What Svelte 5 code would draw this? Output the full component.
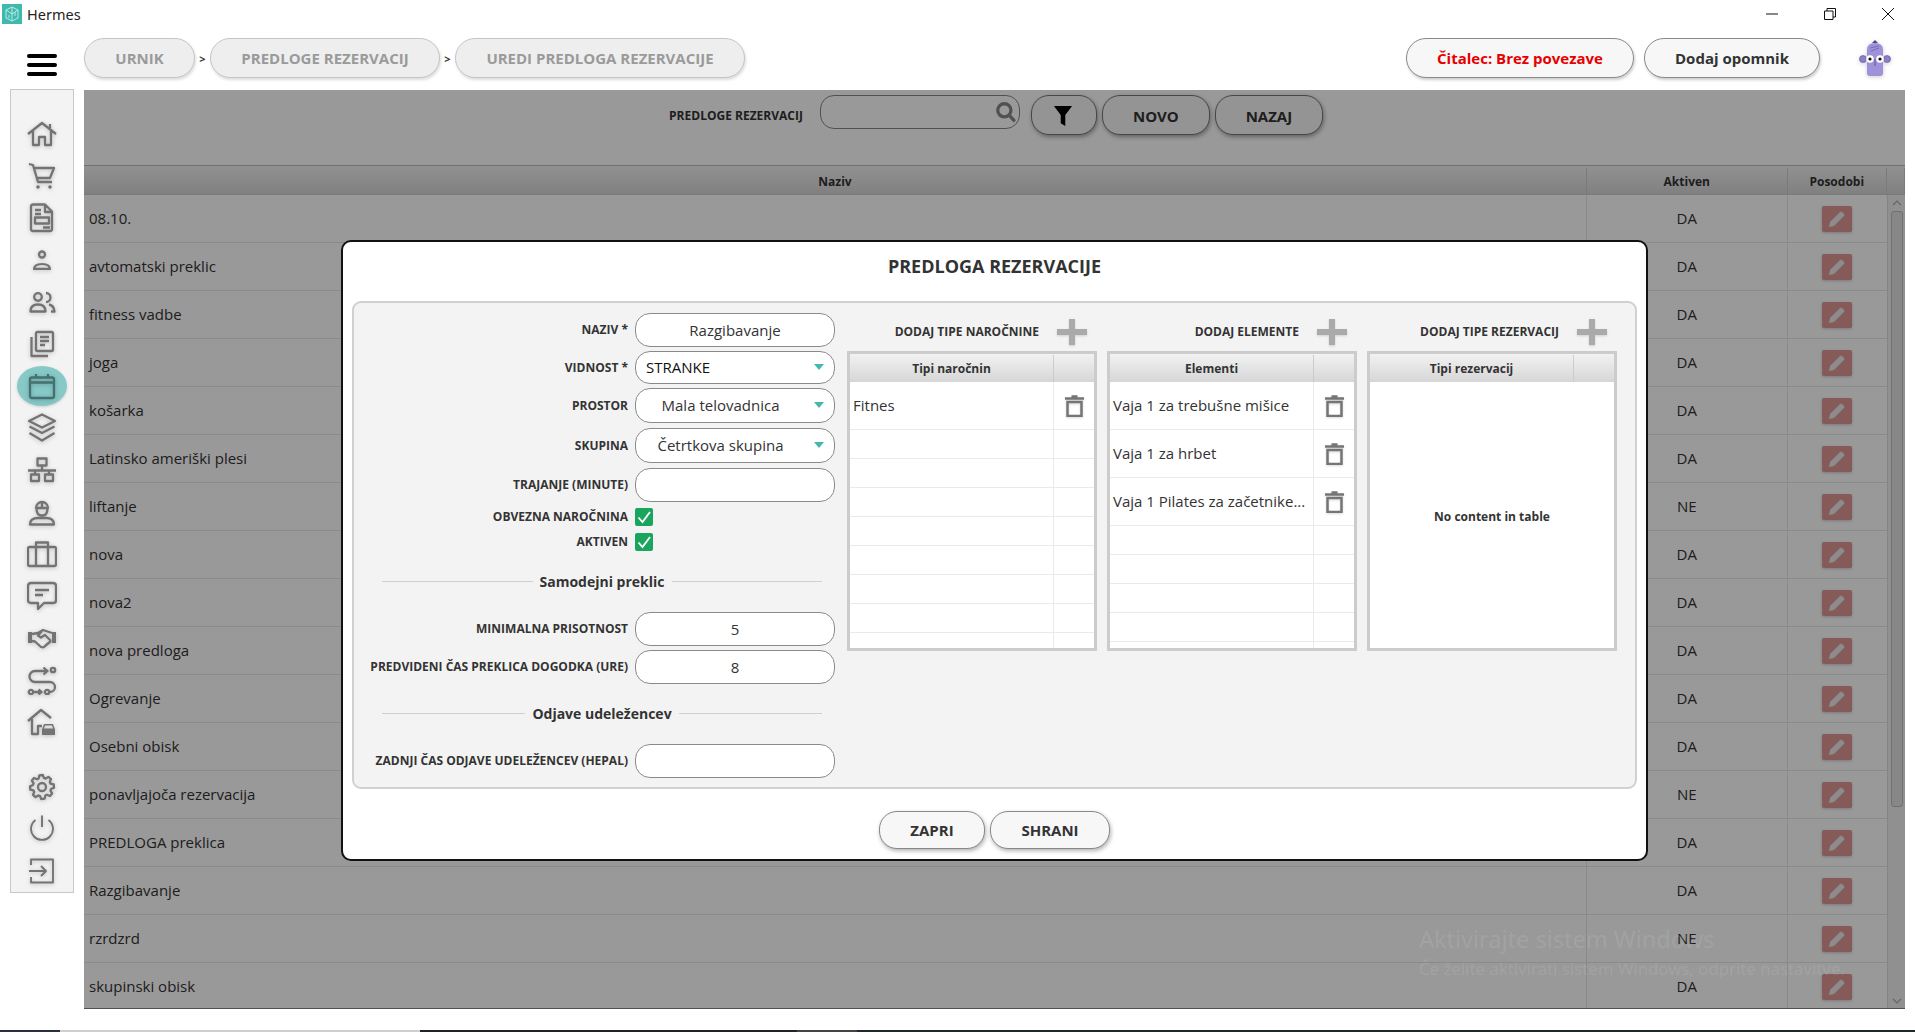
<script>
  // circle as a path fragment, so every icon stays one stroked path
  const c = (x, y, r) => `M${x - r} ${y}a${r} ${r} 0 1 0 ${2 * r} 0a${r} ${r} 0 1 0 ${-2 * r} 0`;

  function gear(cx, cy, outer, inner, teeth) {
    let d = '';
    const step = (Math.PI * 2) / teeth;
    for (let i = 0; i < teeth; i++) {
      const a = i * step - step / 2;
      const pts = [
        [inner, a + step * 0.02],
        [outer, a + step * 0.22],
        [outer, a + step * 0.58],
        [inner, a + step * 0.78],
      ];
      for (const [r, t] of pts) {
        d += `${d ? 'L' : 'M'}${(cx + r * Math.cos(t)).toFixed(2)} ${(cy + r * Math.sin(t)).toFixed(2)}`;
      }
    }
    return d + 'Z';
  }

  const mainIcons = [
    { d: 'M1 15L15 4l14 11M23 9V5M6 12v14h6v-8h6v8h6V12' },
    { d: 'M2 3l4 1 5 17h14M7.500 7H27l-4 10H10', fill: c(11, 26, 1.800) + c(23, 26, 1.800) },
    { d: 'M6 1.500h12l7 7V26q0 2-2 2H6q-2 0-2-2V3.500q0-2 2-2zM18 2v7h7M8 7h6M8 11h6M8 14.500h14v6H8zM16 24.500h7' },
    { d: c(15, 9.500, 3), thinHead: true, fill: 'M6 25q-.5-7 9-7t9 7zM8.500 22.800h13q-1-2.800-6.500-2.800t-6.500 2.800z' },
    { d: c(11, 10, 3.800) + 'M19 6a4.500 4.500 0 0 1 0 9M3.500 24.500q0-7 7.500-7t7.500 7zM22 17.500q5 1 5.500 7H24' },
    { d: 'M10.500 3H24.500Q26 3 26 4.500V20.500Q26 22 24.500 22H10.500Q9 22 9 20.500V4.500Q9 3 10.500 3zM13 8h9M13 12h9M13 16h5M4.500 8V27H21' },
    { d: 'M5 6.500H25Q27 6.500 27 8.500V25Q27 27 25 27H5Q3 27 3 25V8.500Q3 6.500 5 6.500zM3 11.500H27M9 3V7M21 3V7', active: true },
    { d: 'M15 1.500L28 8 15 14.500 2 8zM2.500 13.500L15 20 27.500 13.500M2.500 20L15 27.500 27.500 20' },
    { d: 'M10.500 3.500h9v7h-9zM15 10.500V15M1 15.500H29M8 15.500V19M22 15.500V19M4 19.500h8v6.500H4zM18 19.500h8v6.500h-8z' },
    { d: 'M9 11a6 6 0 0 1 12 0zM15 5v6M9.500 11.500q0 7 5.500 7t5.500-7M3 27.500q0-6.500 8-6.500h8q8 0 8 6.500z' },
    { d: 'M2.500 8H27.500Q29 8 29 9.500V25.500Q29 27 27.500 27H2.500Q1 27 1 25.500V9.500Q1 8 2.500 8zM9 8V3.500H21V8M9 8V27M21 8V27' },
    { d: 'M4 2H26Q29 2 29 5V19Q29 22 26 22H17L11 28V22H4Q1 22 1 19V5Q1 2 4 2zM8 9H22M8 14h8' },
    { d: 'M5 11l6-1 5-3 9 3M5 18l3 .5 6 5.500q3 1 4-1l6-5M15 8l-4 4.500 3 2 4-2.500 6 6', fill: 'M1 9h4v11H1zM25 9h4v11h-4z' },
    { d: 'M20 6H8a5.500 5.500 0 0 0 0 11H23a5 5 0 0 1 0 10h-1M16.500 2.500L20.500 6l-4 3.500M7 27h7M11.500 24.500L14.500 27l-3 2.500' + c(26, 5, 2.200) + c(4, 27, 2.200) + c(20, 27, 2.200) },
    { d: 'M1 14L14 3l10 8M5 12V27h6V19h4', fill: 'M15 28v-5.500l2-5.500h9l2 5.500V28zM18 18.500l-1 3h9l-1-3z' },
  ];

  const bottomIcons = [
    { d: gear(15, 15, 12, 9.200, 8) + c(15, 15, 4) },
    { d: 'M8.500 6a11 11 0 1 0 13 0M15 1.500V13', thin: true },
    { d: 'M4 9V3.500H26V26.500H4V21M2 15H19M14 10l5 5-5 5', thin: true },
  ];

  const templates = [
    ['08.10.', 'DA'], ['avtomatski preklic', 'DA'], ['fitness vadbe', 'DA'], ['joga', 'DA'],
    ['košarka', 'DA'], ['Latinsko ameriški plesi', 'DA'], ['liftanje', 'NE'], ['nova', 'DA'],
    ['nova2', 'DA'], ['nova predloga', 'DA'], ['Ogrevanje', 'DA'], ['Osebni obisk', 'DA'],
    ['ponavljajoča rezervacija', 'NE'], ['PREDLOGA preklica', 'DA'], ['Razgibavanje', 'DA'],
    ['rzrdzrd', 'NE'], ['skupinski obisk', 'DA'],
  ];

  const tables = [
    { add: 'DODAJ TIPE NAROČNINE', head: 'Tipi naročnin', items: ['Fitnes'], blanks: 8 },
    { add: 'DODAJ ELEMENTE', head: 'Elementi', items: ['Vaja 1 za trebušne mišice', 'Vaja 1 za hrbet', 'Vaja 1 Pilates za začetnike...'], blanks: 5 },
    { add: 'DODAJ TIPE REZERVACIJ', head: 'Tipi rezervacij', items: [], blanks: 0 },
  ];
</script>

{#snippet trash()}
  <svg class="trash" viewBox="0 0 19 22" aria-hidden="true">
    <path d="M6.500 1.500h6M0 3.500h19" />
    <path d="M2.500 7h14v14h-14z" />
  </svg>
{/snippet}

{#snippet chevron()}
  <svg class="chev" viewBox="0 0 10 6" aria-hidden="true"><path d="M0 0h10L5 6z" /></svg>
{/snippet}

{#snippet check()}
  <span class="check">
    <svg viewBox="0 0 18 18" aria-hidden="true"><path d="M3.500 9.500l4 4.500 7.500-10" /></svg>
  </span>
{/snippet}

<div class="page">
  <div class="titlebar">
    <svg class="logo" viewBox="0 0 20 20" aria-hidden="true">
      <rect width="20" height="20" fill="#3db9ad" />
      <path d="M10 3l6 3v8l-6 3-6-3V6zM10 3v14M4 6l6 4 6-4M7 11v3M13 8v4" fill="none" stroke="#bfe9e4" stroke-width="1" />
    </svg>
    <span class="app-name">Hermes</span>
    <div class="win-controls">
      <svg viewBox="0 0 12 12" aria-hidden="true"><path d="M0 6h12" /></svg>
      <svg viewBox="0 0 12 12" aria-hidden="true"><path d="M.5 3h8.500v8.500H.5zM3 3V.5h8.500V9H9" /></svg>
      <svg viewBox="0 0 12 12" aria-hidden="true"><path d="M0 0l12 12M12 0L0 12" /></svg>
    </div>
  </div>

  <div class="topbar">
    <div class="burger"><span></span><span></span><span></span></div>
    <nav class="crumbs">
      <button class="crumb urnik">URNIK</button>
      <span class="sep">&gt;</span>
      <button class="crumb templates">PREDLOGE REZERVACIJ</button>
      <span class="sep">&gt;</span>
      <button class="crumb edit">UREDI PREDLOGA REZERVACIJE</button>
    </nav>
    <div class="top-right">
      <button class="pill reader">Čitalec: Brez povezave</button>
      <button class="pill reminder">Dodaj opomnik</button>
      <svg class="avatar" viewBox="0 0 32 38" aria-hidden="true">
        <circle cx="4" cy="20" r="3.500" fill="#8d7fc8" stroke="#5b4f94" stroke-width=".6" />
        <circle cx="28" cy="20" r="3.500" fill="#8d7fc8" stroke="#5b4f94" stroke-width=".6" />
        <path d="M16 1l3 3h-6z" fill="#4f4594" />
        <path d="M8 11q0-7 8-7t8 7v23q0 3-3 3H11q-3 0-3-3z" fill="#a092d8" />
        <path d="M11 9l9-2M12 12l8-3" stroke="#6e61ad" stroke-width=".8" />
        <circle cx="11" cy="20" r="3.800" fill="#fff" />
        <circle cx="21" cy="20" r="3.800" fill="#fff" />
        <circle cx="11" cy="20" r="1.600" fill="#111" />
        <circle cx="21" cy="20" r="1.600" fill="#111" />
        <path d="M16 20v7" stroke="#4f4594" stroke-width=".8" />
      </svg>
    </div>
  </div>

  <div class="body">
    <aside class="sidebar">
      <div class="icon-group">
        {#each mainIcons as icon}
          <div class="icon-slot" class:active={icon.active}>
            <svg viewBox="0 0 30 30" aria-hidden="true">
              <path d={icon.d} />
              {#if icon.fill}<path class="solid" d={icon.fill} fill-rule="evenodd" />{/if}
            </svg>
          </div>
        {/each}
      </div>
      <div class="icon-group bottom">
        {#each bottomIcons as icon}
          <div class="icon-slot" class:thin={icon.thin}>
            <svg viewBox="0 0 30 30" aria-hidden="true"><path d={icon.d} /></svg>
          </div>
        {/each}
      </div>
    </aside>

    <main class="main">
      <div class="toolbar">
        <span class="tool-label">PREDLOGE REZERVACIJ</span>
        <div class="search">
          <svg viewBox="0 0 20 20" aria-hidden="true">
            <circle cx="8.500" cy="8.500" r="6" />
            <path d="M13 13l5 5.500" />
          </svg>
        </div>
        <button class="tool-btn filter" aria-label="Filter">
          <svg viewBox="0 0 20 22" aria-hidden="true"><path d="M0 0h20l-7.500 10v12l-5-3V10z" /></svg>
        </button>
        <button class="tool-btn novo">NOVO</button>
        <button class="tool-btn nazaj">NAZAJ</button>
      </div>

      <div class="list">
        <div class="list-head">
          <div>Naziv</div>
          <div>Aktiven</div>
          <div>Posodobi</div>
          <div></div>
        </div>
        <div class="list-body">
          <div class="rows">
            {#each templates as [name, active]}
              <div class="list-row">
                <div class="name">{name}</div>
                <div class="status">{active}</div>
                <div class="action">
                  <button class="edit-btn" aria-label="Posodobi">
                    <svg viewBox="0 0 16 16" aria-hidden="true">
                      <path d="M0 16l1-5L11 1q1-1 2 0l2 2q1 1 0 2L5 15z" />
                    </svg>
                  </button>
                </div>
              </div>
            {/each}
          </div>
          <div class="scrollbar">
            <svg viewBox="0 0 10 6" aria-hidden="true"><path d="M1 5l4-4 4 4" /></svg>
            <div class="thumb"></div>
            <svg viewBox="0 0 10 6" aria-hidden="true"><path d="M1 1l4 4 4-4" /></svg>
          </div>
        </div>
      </div>

      <div class="overlay">
        <section class="modal">
          <h2>PREDLOGA REZERVACIJE</h2>
          <div class="panel">
            <div class="form">
              <div class="row r34"><span class="lbl">NAZIV *</span><div class="field center">Razgibavanje</div></div>
              <div class="row r33"><span class="lbl">VIDNOST *</span><div class="field select left">STRANKE{@render chevron()}</div></div>
              <div class="row r35"><span class="lbl">PROSTOR</span><div class="field select">Mala telovadnica{@render chevron()}</div></div>
              <div class="row r35"><span class="lbl">SKUPINA</span><div class="field select">Četrtkova skupina{@render chevron()}</div></div>
              <div class="row r34"><span class="lbl">TRAJANJE (MINUTE)</span><div class="field"></div></div>
              <div class="row check-row first"><span class="lbl">OBVEZNA NAROČNINA</span>{@render check()}</div>
              <div class="row check-row"><span class="lbl">AKTIVEN</span>{@render check()}</div>

              <div class="divider one"><span>Samodejni preklic</span></div>
              <div class="row r34"><span class="lbl">MINIMALNA PRISOTNOST</span><div class="field center">5</div></div>
              <div class="row r34"><span class="lbl">PREDVIDENI ČAS PREKLICA DOGODKA (URE)</span><div class="field center">8</div></div>

              <div class="divider two"><span>Odjave udeležencev</span></div>
              <div class="row r34"><span class="lbl">ZADNJI ČAS ODJAVE UDELEŽENCEV (HEPAL)</span><div class="field"></div></div>
            </div>

            <div class="sub-tables">
              {#each tables as t}
                <div class="sub-col">
                  <div class="sub-add">
                    <span>{t.add}</span>
                    <svg viewBox="0 0 30 26" aria-hidden="true"><path d="M12 0h6v10h12v6H18v10h-6V16H0v-6h12z" /></svg>
                  </div>
                  <div class="sub-table">
                    <div class="sub-head"><div>{t.head}</div><div></div></div>
                    {#each t.items as item}
                      <div class="sub-row tall">
                        <div class="sub-name">{item}</div>
                        <div class="sub-del">{@render trash()}</div>
                      </div>
                    {/each}
                    {#each Array(t.blanks) as _}
                      <div class="sub-row"><div></div><div></div></div>
                    {/each}
                    {#if t.items.length === 0}
                      <div class="empty">No content in table</div>
                    {/if}
                  </div>
                </div>
              {/each}
            </div>
          </div>
          <div class="modal-actions">
            <button class="act zapri">ZAPRI</button>
            <button class="act shrani">SHRANI</button>
          </div>
        </section>
      </div>

      <div class="watermark">
        <div class="wm-big">Aktivirajte sistem Windows</div>
        <div class="wm-small">Če želite aktivirati sistem Windows, odprite nastavitve.</div>
      </div>
    </main>
  </div>

  <div class="taskbar">
    <span class="t1"></span><span class="t2"></span><span class="t3"></span><span class="t4"></span><span class="t5"></span>
  </div>
</div>

<style>
  :global(body) {
    margin: 0;
    background: #fff;
    font-family: "Open Sans", "Liberation Sans", sans-serif;
    color: #333;
  }

  button {
    font-family: inherit;
    cursor: pointer;
    padding: 0;
  }

  .page {
    width: 1915px;
    height: 1032px;
    overflow: hidden;
    display: flex;
    flex-direction: column;
  }

  .titlebar {
    height: 32px;
    display: flex;
    align-items: flex-start;
    flex-shrink: 0;
  }

  .logo {
    width: 20px;
    height: 20px;
    margin: 4px 0 0 2px;
  }

  .app-name {
    margin: 4px 0 0 5px;
    font-family: "Noto Sans", sans-serif;
    font-size: 14.500px;
    line-height: 20px;
    color: #222;
  }

  .win-controls {
    margin-left: auto;
    margin-right: 21px;
    margin-top: 8px;
    display: flex;
    gap: 46px;
  }

  .win-controls svg {
    width: 12px;
    height: 12px;
    fill: none;
    stroke: #111;
    stroke-width: 1;
  }

  .topbar {
    height: 58px;
    display: flex;
    align-items: flex-start;
    padding: 6px 24px 0 27px;
    flex-shrink: 0;
    box-sizing: border-box;
  }

  .burger {
    width: 30px;
    margin: 16px 27px 0 0;
    display: flex;
    flex-direction: column;
    gap: 5px;
  }

  .burger span {
    height: 4px;
    border-radius: 2px;
    background: #000;
  }

  .crumbs {
    display: flex;
    align-items: center;
  }

  .crumb {
    height: 40px;
    box-sizing: border-box;
    border: 1.500px solid #c6c6c6;
    border-radius: 20px;
    background: #eee;
    color: #9a9a9a;
    font-size: 15px;
    font-weight: 700;
    box-shadow: 1px 2px 3px rgba(0, 0, 0, 0.14);
  }

  .urnik { width: 111px; }
  .templates { width: 230px; }
  .edit { width: 290px; }

  .sep {
    width: 15px;
    text-align: center;
    font-size: 11px;
    font-weight: 700;
    color: #333;
  }

  .top-right {
    margin-left: auto;
    display: flex;
    align-items: flex-start;
  }

  .pill {
    height: 40px;
    box-sizing: border-box;
    border: 1.500px solid #8a8a8a;
    border-radius: 20px;
    background: #f7f7f7;
    font-size: 15px;
    font-weight: 700;
    box-shadow: 1px 2px 3px rgba(0, 0, 0, 0.2);
  }

  .reader {
    width: 228px;
    color: #e60000;
  }

  .reminder {
    width: 176px;
    margin-left: 10px;
    color: #333;
  }

  .avatar {
    width: 32px;
    height: 38px;
    margin: 1px 0 0 39px;
    filter: drop-shadow(0 1px 2px rgba(0, 0, 0, 0.2));
  }

  .body {
    display: flex;
    height: 919px;
    flex-shrink: 0;
  }

  .sidebar {
    width: 64px;
    height: 804px;
    margin: -1px 0 0 10px;
    box-sizing: border-box;
    background: #f3f3f3;
    border: 1.500px solid #c8c8c8;
    padding-top: 23px;
  }

  .icon-slot {
    height: 42px;
    display: flex;
    align-items: center;
    justify-content: center;
    position: relative;
  }

  .icon-slot svg {
    width: 30px;
    height: 30px;
    fill: none;
    stroke: #737373;
    stroke-width: 2.300;
    stroke-linejoin: round;
    filter: drop-shadow(0 1px 2px rgba(0, 0, 0, 0.22));
    position: relative;
  }

  .icon-slot .solid {
    fill: #737373;
    stroke: none;
  }

  .icon-slot.thin svg {
    stroke-width: 1.900;
  }

  .icon-slot.active::before {
    content: "";
    position: absolute;
    left: 6px;
    top: 1px;
    width: 50px;
    height: 40px;
    border-radius: 50%;
    background: #86c9c6;
    box-shadow: 0 1px 3px rgba(0, 0, 0, 0.15);
  }

  .icon-slot.active svg {
    stroke: #44706f;
  }

  .bottom {
    margin-top: 23px;
  }

  .main {
    position: relative;
    width: 1821px;
    margin-left: 10px;
    display: flex;
    flex-direction: column;
    background: #fff;
    overflow: hidden;
  }

  .toolbar {
    height: 75px;
    flex-shrink: 0;
    box-sizing: border-box;
    padding: 5px 0 0 3px;
    display: flex;
    justify-content: center;
    align-items: flex-start;
  }

  .tool-label {
    font-size: 12px;
    font-weight: 700;
    line-height: 42px;
    color: #333;
  }

  .search {
    width: 200px;
    height: 34px;
    box-sizing: border-box;
    margin-left: 17px;
    border: 1.500px solid #888;
    border-radius: 14px;
    background: #fff;
    display: flex;
    align-items: center;
    justify-content: flex-end;
    padding-right: 2px;
  }

  .search svg {
    width: 22px;
    height: 22px;
    fill: none;
    stroke: #888;
    stroke-width: 3;
  }

  .tool-btn {
    height: 40px;
    width: 108px;
    box-sizing: border-box;
    margin-left: 5px;
    padding-top: 2px;
    border: 1.500px solid #777;
    border-radius: 18px;
    background: #f7f7f7;
    font-size: 15px;
    font-weight: 700;
    color: #333;
    box-shadow: 1px 2px 4px rgba(0, 0, 0, 0.35);
  }

  .filter {
    width: 66px;
    margin-left: 11px;
    display: flex;
    align-items: center;
    justify-content: center;
  }

  .filter svg {
    width: 20px;
    height: 20px;
    fill: #000;
    margin-left: -2px;
  }

  .novo { margin-left: 5px; }

  .list {
    flex: 1;
    display: flex;
    flex-direction: column;
    min-height: 0;
    border-bottom: 1.500px solid #888;
  }

  .list-head,
  .list-row {
    display: grid;
    grid-template-columns: 1503px 200.500px 99.500px;
  }

  .list-head {
    grid-template-columns: 1503px 200.500px 99.500px 18px;
    height: 30px;
    flex-shrink: 0;
    box-sizing: border-box;
    padding-top: 2px;
    border-top: 1.500px solid #bbb;
    border-bottom: 1.500px solid #ccc;
    background: linear-gradient(#f2f2f2, #d6d6d6);
    font-size: 12px;
    font-weight: 700;
    color: #333;
  }

  .list-head > div {
    display: flex;
    align-items: center;
    justify-content: center;
    border-right: 1px solid #ccc;
  }

  .list-body {
    flex: 1;
    min-height: 0;
    display: flex;
  }

  .rows {
    width: 1803px;
    overflow: hidden;
  }

  .list-row {
    height: 48px;
    box-sizing: border-box;
    border-bottom: 1px solid #e6e6e6;
    font-size: 15px;
    color: #333;
    align-items: stretch;
  }

  .name {
    padding-left: 5px;
    line-height: 47px;
    border-right: 1px solid #e6e6e6;
  }

  .status {
    text-align: center;
    line-height: 47px;
    border-right: 1px solid #e6e6e6;
  }

  .action {
    display: flex;
    align-items: center;
    justify-content: center;
  }

  .edit-btn {
    width: 30px;
    height: 26px;
    border: none;
    border-radius: 2px;
    background: #e19696;
    display: flex;
    align-items: center;
    justify-content: center;
    box-shadow: 0 1px 3px rgba(0, 0, 0, 0.2);
  }

  .edit-btn svg {
    width: 16px;
    height: 16px;
    fill: #eaeaea;
  }

  .scrollbar {
    width: 18px;
    background: #f0f0f0;
    border-left: 1px solid #ddd;
    box-sizing: border-box;
    display: flex;
    flex-direction: column;
    align-items: center;
    padding-top: 5px;
  }

  .scrollbar svg {
    width: 10px;
    height: 6px;
    fill: none;
    stroke: #aaa;
    stroke-width: 1.200;
    flex-shrink: 0;
  }

  .thumb {
    width: 12px;
    height: 596px;
    margin: 5px 0 191px;
    box-sizing: border-box;
    border: 1px solid #bbb;
    border-radius: 3px;
    background: #e2e2e2;
    flex-shrink: 0;
  }

  .overlay {
    position: absolute;
    inset: 0;
    padding-top: 1px;
    background: rgba(0, 0, 0, 0.4);
    display: flex;
    align-items: center;
    justify-content: center;
  }

  .modal {
    width: 1307px;
    height: 621px;
    box-sizing: border-box;
    background: #fff;
    border: 2px solid #111;
    border-radius: 10px;
    padding: 0 9px;
    display: flex;
    flex-direction: column;
  }

  h2 {
    margin: 0;
    height: 59px;
    line-height: 48px;
    text-align: center;
    font-size: 18px;
    font-weight: 700;
    color: #333;
    flex-shrink: 0;
  }

  .panel {
    height: 488px;
    flex-shrink: 0;
    box-sizing: border-box;
    background: #f3f3f3;
    border: 2px solid #d0d0d0;
    border-radius: 9px;
    display: flex;
  }

  .form {
    width: 481px;
    padding-top: 10px;
    display: flex;
    flex-direction: column;
    flex-shrink: 0;
  }

  .row {
    display: grid;
    grid-template-columns: 274px 200px;
    column-gap: 7px;
    align-items: center;
    margin-bottom: 4px;
  }

  .r33 { height: 33px; }
  .r34 { height: 34px; }
  .r35 { height: 35px; margin-bottom: 5px; }

  .lbl {
    text-align: right;
    font-size: 12px;
    font-weight: 700;
    color: #333;
    white-space: nowrap;
  }

  .check-row {
    height: 18px;
    margin-bottom: 7px;
  }

  .first { margin-top: 2px; }

  .check {
    width: 18px;
    height: 18px;
    border-radius: 2px;
    background: #1aa55f;
    display: block;
  }

  .check svg {
    display: block;
    fill: none;
    stroke: #fff;
    stroke-width: 1.800;
  }

  .field {
    height: 100%;
    box-sizing: border-box;
    border: 1.500px solid #8a8a8a;
    border-radius: 15px;
    background: #fff;
    font-size: 15px;
    color: #333;
    display: flex;
    align-items: center;
    justify-content: center;
    position: relative;
  }

  .select {
    padding-right: 29px;
  }

  .left {
    justify-content: flex-start;
    padding-left: 10px;
    color: #111;
  }

  .chev {
    position: absolute;
    right: 10px;
    top: 50%;
    margin-top: -3px;
    width: 10px;
    height: 6px;
    fill: #45b8ad;
  }

  .divider {
    margin: 0 13px 0 28px;
    display: flex;
    align-items: center;
    gap: 7px;
    height: 20px;
    font-size: 14px;
    font-weight: 700;
    color: #333;
  }

  .divider::before,
  .divider::after {
    content: "";
    flex: 1;
    height: 1px;
    background: #cfcfcf;
  }

  .one {
    margin-top: 14px;
    margin-bottom: 20px;
  }

  .two {
    margin-top: 16px;
    margin-bottom: 20px;
  }

  .sub-tables {
    margin-left: 12px;
    display: grid;
    grid-template-columns: repeat(3, 250px);
    column-gap: 10px;
    align-items: start;
  }

  .sub-col {
    padding-top: 15px;
  }

  .sub-add {
    height: 28px;
    margin-bottom: 5px;
    display: flex;
    align-items: center;
    justify-content: flex-end;
    padding-right: 10px;
    font-size: 12px;
    font-weight: 700;
    color: #333;
  }

  .sub-add svg {
    width: 30px;
    height: 26px;
    margin-left: 18px;
    fill: #aaa;
    filter: drop-shadow(0 1px 1px rgba(0, 0, 0, 0.15));
  }

  .sub-table {
    height: 300px;
    box-sizing: border-box;
    border: 3px solid #ccc;
    background: #fff;
    overflow: hidden;
    position: relative;
  }

  .sub-head,
  .sub-row {
    display: grid;
    grid-template-columns: 204px 1fr;
  }

  .sub-head {
    height: 28px;
    padding-top: 1px;
    box-sizing: border-box;
    background: linear-gradient(#f2f2f2, #d6d6d6);
    font-size: 12px;
    font-weight: 700;
    color: #333;
  }

  .sub-head > div:first-child {
    display: flex;
    align-items: center;
    justify-content: center;
    border-right: 1px solid #ccc;
  }

  .sub-row {
    height: 29px;
    box-sizing: border-box;
    border-bottom: 1px solid #eaeaea;
  }

  .sub-row > div:first-child {
    border-right: 1px solid #eaeaea;
  }

  .tall {
    height: 48px;
  }

  .sub-name {
    padding-left: 3px;
    font-size: 15px;
    line-height: 47px;
    color: #333;
    white-space: nowrap;
    overflow: hidden;
    text-overflow: ellipsis;
  }

  .sub-del {
    display: flex;
    align-items: center;
    justify-content: center;
  }

  .trash {
    width: 19px;
    height: 22px;
    margin-top: 1px;
    fill: none;
    stroke: #757575;
    stroke-width: 2.500;
    filter: drop-shadow(0 1px 1px rgba(0, 0, 0, 0.15));
  }

  .empty {
    position: absolute;
    left: 0;
    right: 0;
    top: 154px;
    text-align: center;
    font-size: 12px;
    font-weight: 700;
    color: #333;
  }

  .modal-actions {
    margin-top: 22px;
    display: flex;
    justify-content: center;
    gap: 5px;
  }

  .act {
    height: 38px;
    box-sizing: border-box;
    border: 1.500px solid #888;
    border-radius: 18px;
    background: #f7f7f7;
    font-size: 15px;
    font-weight: 700;
    color: #333;
    box-shadow: 1px 2px 4px rgba(0, 0, 0, 0.3);
  }

  .zapri { width: 106px; }
  .shrani { width: 120px; }

  .watermark {
    position: absolute;
    left: 1335px;
    top: 833px;
    white-space: nowrap;
    color: rgba(255, 255, 255, 0.1);
    font-family: "Noto Sans", sans-serif;
    pointer-events: none;
  }

  .wm-big {
    font-size: 23.500px;
    line-height: 32px;
  }

  .wm-small {
    font-size: 16.800px;
    line-height: 28px;
  }

  .taskbar {
    margin-top: 21px;
    height: 2px;
    display: flex;
    flex-shrink: 0;
  }

  .t1 { width: 60px; background: #2a2f38; }
  .t2 { width: 360px; background: #cfcfcf; }
  .t3 { width: 377px; background: #202426; }
  .t4 { width: 60px; background: #444; }
  .t5 { flex: 1; background: #20282a; }
</style>
